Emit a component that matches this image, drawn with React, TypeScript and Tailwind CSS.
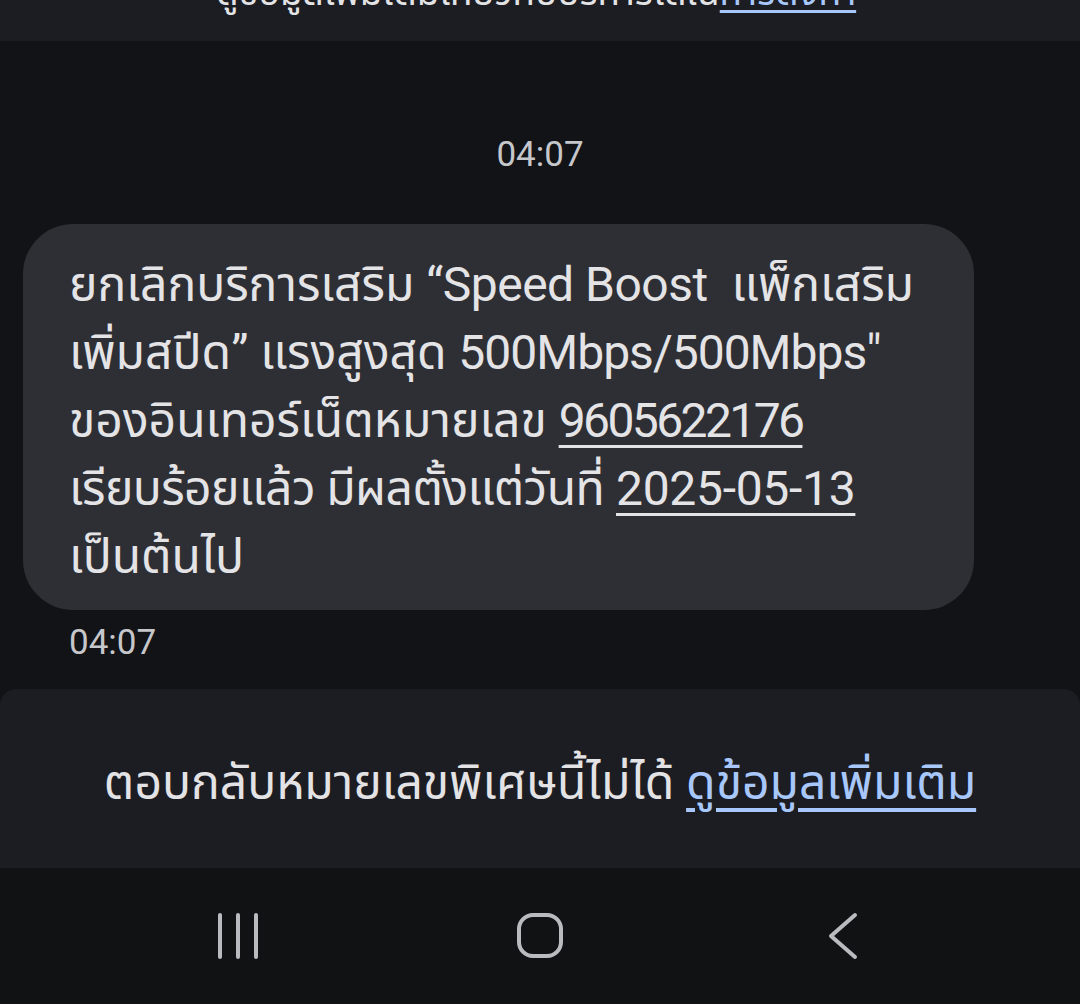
import { useState } from 'react';

const font = { fontFamily: "Roboto, 'Noto Sans Thai', 'Noto Sans', sans-serif" };

const RecentIcon = () => (
  <svg width="46" height="46" viewBox="0 0 46 46" fill="none">
    <g stroke="#babbbe" strokeWidth="4" strokeLinecap="round">
      <line x1="5" y1="2" x2="5" y2="44" />
      <line x1="23" y1="2" x2="23" y2="44" />
      <line x1="41" y1="2" x2="41" y2="44" />
    </g>
  </svg>
);

const HomeIcon = () => (
  <svg width="48" height="48" viewBox="0 0 48 48" fill="none">
    <rect x="3" y="3" width="42" height="41" rx="14" stroke="#babbbe" strokeWidth="4" />
  </svg>
);

const BackIcon = () => (
  <svg width="34" height="48" viewBox="0 0 34 48" fill="none">
    <path d="M30 3 L6 24 L30 45" stroke="#babbbe" strokeWidth="4" strokeLinecap="round" strokeLinejoin="round" />
  </svg>
);

export default function App() {
  const [tapped, setTapped] = useState(false);

  return (
    <div className="w-[1080px] h-[1004px] bg-[#121317] flex flex-col overflow-hidden" style={font}>
      {/* Previous info banner, scrolled off the top */}
      <div className="h-[41px] bg-[#1c1d22] overflow-hidden flex justify-center">
        <p className="-mt-[26px] pr-[8px] text-[37px] leading-[37px] text-[#e3e3e6] whitespace-nowrap">
          ดูข้อมูลเพิ่มเติมเกี่ยวกับบริการได้ใน
          <span className="text-[#a8c7fa] underline decoration-[3px] underline-offset-[5px]">การตั้งค่า</span>
        </p>
      </div>

      {/* Timestamp */}
      <div className="pt-[93px] pb-[48px] text-center text-[35px] leading-[42px] text-[#c6c7cb]">04:07</div>

      {/* Message bubble */}
      <div
        className={`ml-[23px] w-[951px] rounded-[50px] pt-[27px] pb-[19px] pl-[46px] text-[48px] leading-[68px] text-[#e4e4e7] whitespace-nowrap ${
          tapped ? 'bg-[#3a3b41]' : 'bg-[#2e2f34]'
        }`}
        onClick={() => setTapped(!tapped)}
      >
        ยกเลิกบริการเสริม <span className="tracking-[-0.5px]">“Speed Boost</span>&nbsp; แพ็กเสริม
        <br />
        เพิ่มสปีด” แรงสูงสุด <span className="tracking-[-1px]">500Mbps/500Mbps"</span>
        <br />
        ของอินเทอร์เน็ตหมายเลข{' '}
        <span className="tracking-[-2.6px] underline decoration-[3px] underline-offset-[8px]">9605622176</span>
        <br />
        <span className="tracking-[-0.6px]">เรียบร้อยแล้ว มีผลตั้งแต่วันที่</span>{' '}
        <span className="tracking-[-0.3px] underline decoration-[3px] underline-offset-[8px]">2025-05-13</span>
        <br />
        เป็นต้นไป
      </div>

      <div className="mt-[12px] pl-[69px] text-[35px] leading-[42px] text-[#c6c7cb]">04:07</div>

      {/* Cannot reply notice */}
      <div className="mt-[25px] h-[179px] bg-[#1c1d22] rounded-t-[16px] flex items-center justify-center pt-[8px]">
        <p className="text-[48px] leading-[60px] text-[#e3e3e6] whitespace-nowrap">
          ตอบกลับหมายเลขพิเศษนี้ไม่ได้{' '}
          <a href="#" className="text-[#a8c7fa] underline decoration-[4px] underline-offset-[9px]">
            ดูข้อมูลเพิ่มเติม
          </a>
        </p>
      </div>

      {/* Navigation bar */}
      <div className="flex-1 bg-[#111214] flex items-center justify-center">
        <div className="w-[302px] flex justify-center">
          <RecentIcon />
        </div>
        <div className="w-[302px] flex justify-center">
          <HomeIcon />
        </div>
        <div className="w-[302px] flex justify-center">
          <BackIcon />
        </div>
      </div>
    </div>
  );
}
